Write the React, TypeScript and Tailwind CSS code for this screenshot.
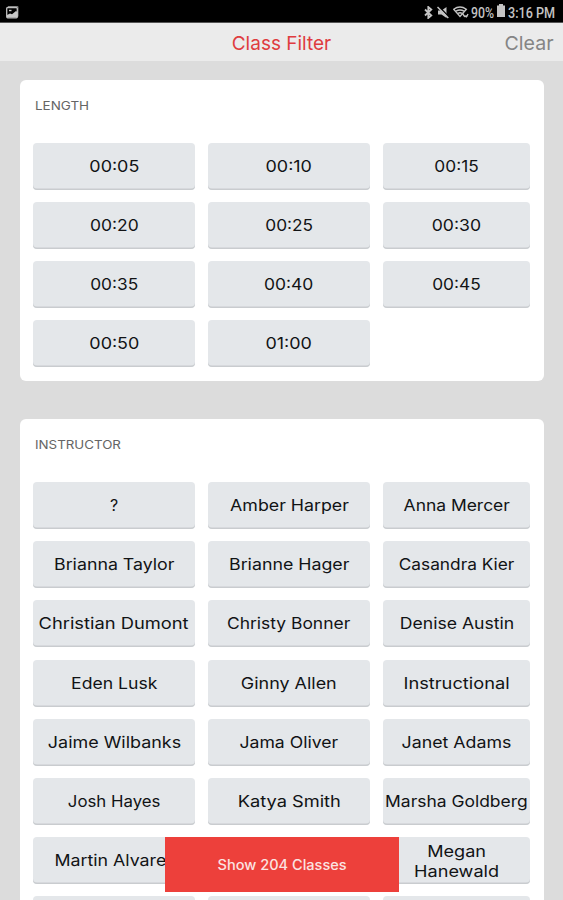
type Item = [label: string, widthClass: string];

const lengths: Item[] = [
  ['00:05', 'scale-x-[1.12]'], ['00:10', 'scale-x-[1.12]'], ['00:15', 'scale-x-[1.08]'],
  ['00:20', 'scale-x-[1.09]'], ['00:25', 'scale-x-[1.08]'], ['00:30', 'scale-x-[1.1]'],
  ['00:35', 'scale-x-[1.08]'], ['00:40', 'scale-x-[1.09]'], ['00:45', 'scale-x-[1.08]'],
  ['00:50', 'scale-x-[1.12]'], ['01:00', 'scale-x-[1.12]'],
];

const instructors: Item[] = [
  ['?', ''], ['Amber Harper', 'scale-x-[1.11]'], ['Anna Mercer', 'scale-x-[1.09]'],
  ['Brianna Taylor', 'scale-x-[1.11]'], ['Brianne Hager', 'scale-x-[1.11]'], ['Casandra Kier', 'scale-x-[1.08]'],
  ['Christian Dumont', 'scale-x-[1.145]'], ['Christy Bonner', 'scale-x-[1.09]'], ['Denise Austin', 'scale-x-[1.1]'],
  ['Eden Lusk', 'scale-x-[1.1]'], ['Ginny Allen', 'scale-x-[1.12]'], ['Instructional', 'scale-x-[1.14]'],
  ['Jaime Wilbanks', 'scale-x-[1.12]'], ['Jama Oliver', 'scale-x-[1.1]'], ['Janet Adams', 'scale-x-[1.11]'],
  ['Josh Hayes', 'scale-x-[1.05]'], ['Katya Smith', 'scale-x-[1.14]'], ['Marsha Goldberg', 'scale-x-[1.09]'],
  ['Martin Alvare', 'scale-x-[1.11] -ml-2'], ['', ''], ['Megan\nHanewald', 'scale-x-[1.13] pt-0.5'],
  ['', ''], ['', ''], ['', ''],
];

function Section({ title, titleClass, items }: { title: string; titleClass: string; items: Item[] }) {
  return (
    <section className="shrink-0 rounded-md bg-white pl-[13px] pr-3.5 pb-3.5">
      <h2 className="h-[63px] pl-[15px] -ml-[13px] pt-4 text-[12px] leading-[19px] text-[#656565]">
        <span className={`inline-block origin-left ${titleClass}`}>{title}</span>
      </h2>
      <div className="grid grid-cols-[162px_162px_147px] gap-x-[13px] gap-y-[12.1px]">
        {items.map(([label, cls], i) => (
          <button
            key={i}
            className="flex h-[47px] items-center justify-center rounded-[4px] bg-[#e4e7ea] pb-px text-center text-[16px] leading-5 text-[#111315] shadow-[inset_0_-1.5px_0.5px_#c9cccf]"
          >
            <span className={`whitespace-pre ${cls}`}>{label}</span>
          </button>
        ))}
      </div>
    </section>
  );
}

function StatusBar() {
  return (
    <div className="flex h-[23px] shrink-0 items-center justify-between border-b border-[#555] bg-black pl-1.5 pr-2 pt-[3px] text-[#c4c4c4]">
      <svg width="13" height="13" viewBox="0 0 13 13">
        <path d="M2 .5h10v10" fill="none" stroke="#777" />
        <rect x="0.7" y="1.5" width="10.6" height="10.3" rx="1" fill="none" stroke="#c0c0c0" strokeWidth="1.3" />
        <path d="M1 11.5V9l3-1.5 2 .8L10 5l1.3 1v5.5z" fill="#c8c8c8" />
        <path d="M3 4.5h2.5" stroke="#c8c8c8" strokeWidth="1.4" />
      </svg>
      <div className="flex items-center">
        <svg width="9" height="13" viewBox="0 0 9 13" fill="none" stroke="currentColor" strokeWidth="1.8">
          <path d="M1 3.5l6.3 6L4.3 12V1l3 2.5-6.3 6" />
        </svg>
        <svg className="ml-1" width="12" height="13" viewBox="0 0 12 13">
          <path d="M1 4.5h3.5l5-3.5v11l-5-3.5H1z" fill="currentColor" />
          <path d="M2 .5l10 10.5" stroke="#000" strokeWidth="1.3" />
          <path d="M.5 1l10.8 11" stroke="currentColor" strokeWidth="1.5" />
        </svg>
        <svg className="ml-1" width="16" height="13" viewBox="0 0 16 13" fill="none" stroke="currentColor" strokeWidth="1.4">
          <path d="M.7 3.3Q7 -1.2 13.3 3.3L7 10.5z" />
          <path d="M3 5.2q4-2.5 8 0M5 7.4q2-1.3 4 0" />
          <path d="M9.5 7.5l2 3 3.5-1M15 8l-2 3.5" />
        </svg>
        <span className="ml-0.5 w-[23px] origin-left scale-x-[.88] whitespace-nowrap font-[Roboto] text-[14px] font-medium leading-4">90%</span>
        <svg className="ml-[3px] -mt-1" width="8" height="13" viewBox="0 0 8 13">
          <path d="M2 0h4v1.5h2V13H0V1.5h2z" fill="currentColor" />
        </svg>
        <span className="ml-[3px] w-[47px] origin-left scale-x-[.9] whitespace-nowrap font-[Roboto] text-[14px] font-medium leading-4">3:16 PM</span>
      </div>
    </div>
  );
}

export default function App() {
  return (
    <div className="relative flex h-[900px] w-[563px] flex-col overflow-hidden bg-[#dcdcdc] font-['Inter','Open_Sans',sans-serif]">
      <StatusBar />
      <header className="grid h-[38px] shrink-0 grid-cols-[1fr_auto_1fr] items-center bg-[#ebebeb] pt-1 text-[19px]">
        <span />
        <h1 className="text-[#df3c3f]">Class Filter</h1>
        <button className="mr-[9px] origin-right scale-x-[1.03] justify-self-end text-[#858585]">Clear</button>
      </header>
      <main className="flex flex-col gap-[38px] pl-5 pr-[19px] pt-[19px]">
        <Section title="LENGTH" titleClass="scale-x-[1.12]" items={lengths} />
        <Section title="INSTRUCTOR" titleClass="scale-x-[1.11]" items={instructors} />
      </main>
      <button className="absolute left-[165px] top-[837px] h-[55px] w-[234px] bg-[#ed403b] text-[14px] font-medium text-[#fbe3e1]">
        <span className="inline-block scale-x-[1.04]">Show 204 Classes</span>
      </button>
    </div>
  );
}
